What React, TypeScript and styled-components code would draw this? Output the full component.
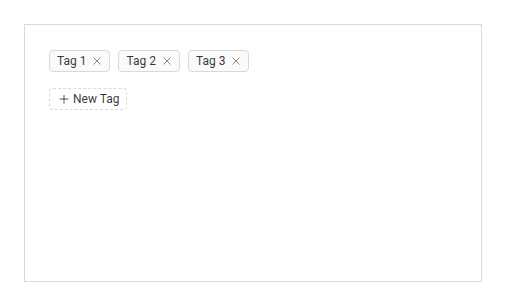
import React, { useState } from "react";
import styled, { createGlobalStyle } from "styled-components";

const GlobalStyle = createGlobalStyle`
  body {
    margin: 0;
    background: #ffffff;
    font-family: Roboto, "Noto Sans", sans-serif;
  }
`;

const Page = styled.div`
  padding: 24px;
  width: 506px;
  box-sizing: border-box;
`;

const Panel = styled.div`
  box-sizing: border-box;
  height: 258px;
  width: 458px;
  border: 1px solid #d9d9d9;
  padding: 25px 24px;
  display: flex;
  flex-direction: column;
  gap: 16px;
  align-items: flex-start;
`;

const TagRow = styled.div`
  display: flex;
  gap: 8px;
`;

const Tag = styled.span<{ $dashed?: boolean }>`
  display: inline-flex;
  align-items: center;
  box-sizing: border-box;
  height: 22px;
  padding: 0 7px;
  font-size: 12px;
  line-height: 20px;
  color: rgba(0, 0, 0, 0.8);
  background: ${(p) => (p.$dashed ? "#ffffff" : "#fafafa")};
  border: 1px ${(p) => (p.$dashed ? "dashed" : "solid")} #d9d9d9;
  border-radius: 4px;
  white-space: nowrap;
  cursor: ${(p) => (p.$dashed ? "pointer" : "default")};
`;

const Close = styled.span`
  display: inline-flex;
  margin-left: 6px;
  color: rgba(0, 0, 0, 0.45);
  cursor: pointer;
`;

const Plus = styled.span`
  display: inline-flex;
  margin-left: 1.5px;
  margin-right: 4.5px;
  color: rgba(0, 0, 0, 0.65);
`;

function CloseIcon() {
  return (
    <svg width="10" height="10" viewBox="0 0 10 10">
      <path d="M1.5 1.5 L8.5 8.5 M8.5 1.5 L1.5 8.5" stroke="currentColor" strokeWidth="1" />
    </svg>
  );
}

function PlusIcon() {
  return (
    <svg width="10" height="10" viewBox="0 0 10 10">
      <path d="M5 1 V9.5 M0.5 5 H9.5" stroke="currentColor" strokeWidth="1" />
    </svg>
  );
}

export default function App() {
  const [tags, setTags] = useState(["Tag 1", "Tag 2", "Tag 3"]);
  return (
    <Page>
      <GlobalStyle />
      <Panel>
        <TagRow>
          {tags.map((t) => (
            <Tag key={t}>
              {t}
              <Close onClick={() => setTags((prev) => prev.filter((x) => x !== t))}>
                <CloseIcon />
              </Close>
            </Tag>
          ))}
        </TagRow>
        <Tag $dashed>
          <Plus>
            <PlusIcon />
          </Plus>
          New Tag
        </Tag>
      </Panel>
    </Page>
  );
}
